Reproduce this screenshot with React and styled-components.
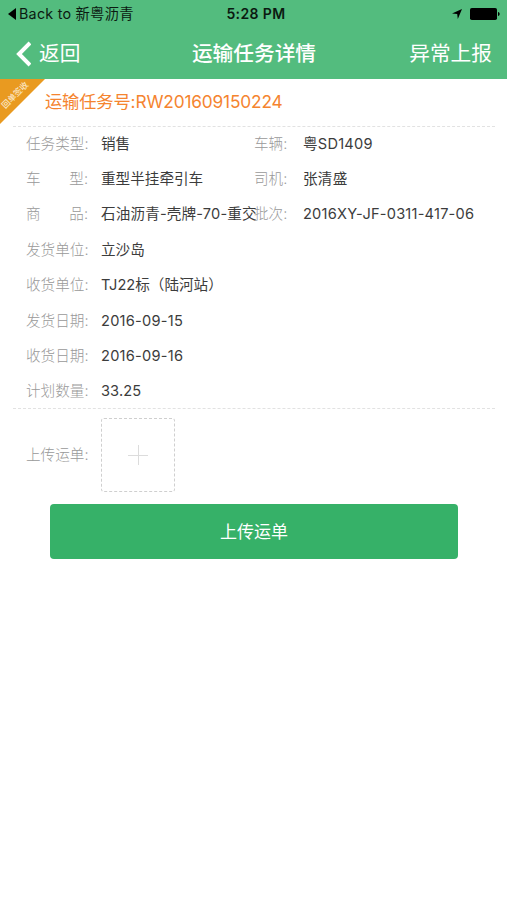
import React from "react";
import styled, { createGlobalStyle } from "styled-components";

const GlobalStyle = createGlobalStyle`
  * {
    box-sizing: border-box;
  }
  body {
    margin: 0;
    background: #fff;
    color: #3c3c3c;
    font-family: Inter, "Noto Sans CJK SC", sans-serif;
    font-size: 14.6px;
  }
`;

const Page = styled.div`
  min-height: 900px;
  background: #fff;
`;

const Header = styled.header`
  height: 79px;
  background: #53bc7e;
`;

const StatusBar = styled.div`
  display: grid;
  grid-template-columns: 1fr auto 1fr;
  align-items: center;
  height: 27px;
  padding: 0 7px 0 8px;
  color: #0b1a11;
  font-size: 14.3px;
  line-height: 25px;
`;

const BackToApp = styled.div`
  display: flex;
  align-items: center;
  gap: 3px;
  letter-spacing: 0.25px;
`;

const Clock = styled.div`
  font-size: 14px;
  font-weight: 600;
  letter-spacing: 0.4px;
  padding-left: 4px;
`;

const StatusIcons = styled.div`
  display: flex;
  justify-content: flex-end;
  align-items: center;
  gap: 8px;
`;

const NavBar = styled.nav`
  display: grid;
  grid-template-columns: 1fr auto 1fr;
  align-items: center;
  height: 52px;
  padding: 0 15px 0 15px;
  color: #fff;
  font-size: 20.7px;
  line-height: 54px;
`;

const NavLink = styled.a`
  display: flex;
  align-items: center;
  justify-content: ${(props) => (props.$end ? "flex-end" : "flex-start")};
  gap: 8px;
`;

const Title = styled.h1`
  margin: 0;
  padding-left: 1px;
  font-size: 20.7px;
  font-weight: 500;
`;

const TaskBar = styled.div`
  position: relative;
  height: 47px;
  padding-left: 45px;
  color: #f5842f;
  font-size: 17.3px;
  letter-spacing: -0.16px;
  line-height: 45px;
  overflow: hidden;
`;

const Ribbon = styled.div`
  position: absolute;
  top: 0;
  left: 0;
  width: 45px;
  height: 45px;
  background: #e99a20;
  clip-path: polygon(0 0, 100% 0, 0 100%);
`;

const RibbonText = styled.span`
  position: absolute;
  top: 10px;
  left: -5px;
  width: 40px;
  color: #fbe6c4;
  font-size: 8.4px;
  font-weight: 500;
  letter-spacing: 0;
  line-height: 12px;
  text-align: center;
  white-space: nowrap;
  transform: rotate(-45deg);
`;

const Divider = styled.hr`
  height: 0;
  margin: 0 12px 0 13px;
  border: 0;
  border-top: 1px dashed #e2e2e2;
`;

const Details = styled.section`
  height: 282px;
  margin-top: -1px;
  padding-left: 26px;
`;

const Row = styled.div`
  display: flex;
  align-items: center;
  height: 35.4px;
  line-height: 20px;
  white-space: nowrap;
`;

const Field = styled.div`
  display: flex;
  align-items: center;
  width: ${(props) => props.$width || "auto"};
`;

const Label = styled.span`
  display: flex;
  flex: none;
  justify-content: space-between;
  width: ${(props) => props.$width};
  margin-right: ${(props) => props.$gap};
  color: #999;
  font-weight: 300;
  line-height: 20px;
  white-space: nowrap;
`;

const Value = styled.span`
  height: 20px;
  color: #3c3c3c;
  letter-spacing: ${(props) => props.$spacing || "0"};
`;

const UploadRow = styled.div`
  display: flex;
  align-items: center;
  padding: 9px 0 0 26px;
`;

const UploadBox = styled.button`
  display: flex;
  align-items: center;
  justify-content: center;
  width: 74px;
  height: 74px;
  padding: 0;
  border: 1px dashed #cfcfcf;
  border-radius: 3px;
  background: #fff;
`;

const SubmitButton = styled.button`
  display: block;
  width: 408px;
  height: 55px;
  margin: 12px 0 0 50px;
  padding: 0 0 2px;
  border: 0;
  border-radius: 4px;
  background: #36b168;
  color: #fff;
  font-family: inherit;
  font-size: 17px;
`;

const rows = [
  { label: ["任务类型"], value: "销售", extra: ["车辆", "粤SD1409"] },
  { label: ["车", "型"], value: "重型半挂牵引车", extra: ["司机", "张清盛"] },
  { label: ["商", "品"], value: "石油沥青-壳牌-70-重交", spacing: "0.15px", extra: ["批次", "2016XY-JF-0311-417-06"] },
  { label: ["发货单位"], value: "立沙岛" },
  { label: ["收货单位"], value: "TJ22标（陆河站）" },
  { label: ["发货日期"], value: "2016-09-15", spacing: "0.25px" },
  { label: ["收货日期"], value: "2016-09-16", spacing: "0.25px" },
  { label: ["计划数量"], value: "33.25", spacing: "0.1px" },
];

function DetailRow({ label, value, spacing, extra }) {
  const last = label.length - 1;
  return (
    <Row>
      <Field $width="228px">
        <Label $width="62px" $gap="13px">
          {label.map((part, i) => (
            <span key={part}>{i === last ? part + ":" : part}</span>
          ))}
        </Label>
        <Value $spacing={spacing}>{value}</Value>
      </Field>
      {extra && (
        <Field>
          <Label $width="34px" $gap="15px">{extra[0]}:</Label>
          <Value $spacing="0.22px">{extra[1]}</Value>
        </Field>
      )}
    </Row>
  );
}

export default function App() {
  return (
    <Page>
      <GlobalStyle />
      <Header>
        <StatusBar>
          <BackToApp>
            <svg width="8" height="12" viewBox="0 0 8 12">
              <path d="M8 0v12L0 6z" fill="#000" />
            </svg>
            Back to 新粤沥青
          </BackToApp>
          <Clock>5:28 PM</Clock>
          <StatusIcons>
            <svg width="10" height="10" viewBox="0 0 10 10">
              <path d="M10 0L5.8 10L5.2 5L0 4.6z" fill="#000" />
            </svg>
            <svg width="30" height="12" viewBox="0 0 30 12">
              <rect width="27" height="12" rx="1.8" fill="#000" />
              <path d="M28 4c2.2.6 2.2 3.4 0 4z" fill="#000" />
            </svg>
          </StatusIcons>
        </StatusBar>
        <NavBar>
          <NavLink>
            <svg width="16" height="26" viewBox="0 0 16 26">
              <path d="M15 2L4 13l11 11" fill="none" stroke="#fff" strokeWidth="4" />
            </svg>
            返回
          </NavLink>
          <Title>运输任务详情</Title>
          <NavLink $end>异常上报</NavLink>
        </NavBar>
      </Header>
      <TaskBar>
        <Ribbon>
          <RibbonText>回单签收</RibbonText>
        </Ribbon>
        运输任务号:RW201609150224
      </TaskBar>
      <Divider />
      <Details>
        {rows.map((row) => (
          <DetailRow key={row.label.join("")} {...row} />
        ))}
      </Details>
      <Divider />
      <UploadRow>
        <Label $width="62px" $gap="13px">上传运单:</Label>
        <UploadBox>
          <svg width="20" height="20" viewBox="0 0 20 20">
            <path d="M10.5 0v20M0 10.5h20" stroke="#dcdcdc" strokeWidth="1" />
          </svg>
        </UploadBox>
      </UploadRow>
      <SubmitButton>上传运单</SubmitButton>
    </Page>
  );
}
